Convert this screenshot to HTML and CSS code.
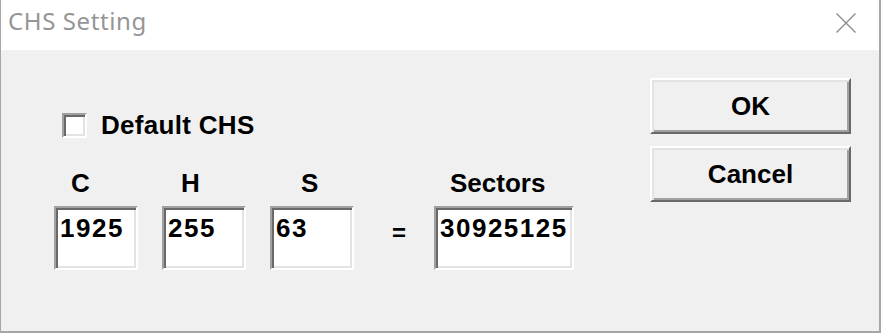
FILE: index.html
```html
<!DOCTYPE html>
<html lang="en">
<head>
    <meta charset="UTF-8">
    <title>CHS Setting</title>
    <link rel="stylesheet" href="styles.css">
</head>
<body>
    <div class="window">
        <div class="titlebar">
            <span class="title">CHS Setting</span>
            <span class="close">
                <svg width="20" height="20" viewBox="0 0 20 20">
                    <path d="M0.5 0.5 L19.5 19.5 M19.5 0.5 L0.5 19.5" stroke="#8a8a8a" stroke-width="1.3" fill="none"/>
                </svg>
            </span>
        </div>

        <div class="client">
            <div class="main">
                <label class="check-row">
                    <span class="checkbox"></span>
                    Default CHS
                </label>

                <div class="fields">
                    <div class="field">
                        <span class="field-label lbl-c">C</span>
                        <div class="edit">1925</div>
                    </div>
                    <div class="field">
                        <span class="field-label lbl-h">H</span>
                        <div class="edit">255</div>
                    </div>
                    <div class="field">
                        <span class="field-label lbl-s">S</span>
                        <div class="edit">63</div>
                    </div>
                    <span class="equals">=</span>
                    <div class="field">
                        <span class="field-label lbl-sectors">Sectors</span>
                        <div class="edit edit-wide">30925125</div>
                    </div>
                </div>
            </div>

            <div class="buttons">
                <button class="btn">OK</button>
                <button class="btn">Cancel</button>
            </div>
        </div>
    </div>
</body>
</html>
```

FILE: styles.css
```css
:root {
    --face: #f0f0f0;
    --light: #e3e3e3;
    --shadow: #a0a0a0;
    --dark: #696969;
    --frame: #a6a6a6;
}

html, body {
    margin: 0;
    padding: 0;
}

body {
    background: var(--face);
    font-family: 'Liberation Sans', Arial, sans-serif;
}

.window {
    width: 881px;
    height: 333px;
    box-sizing: border-box;
    border-left: 1px solid var(--frame);
    border-right: 2px solid var(--frame);
    border-bottom: 2px solid var(--frame);
    display: flex;
    flex-direction: column;
}

.titlebar {
    height: 50px;
    flex: none;
    background: #fff;
    display: flex;
    justify-content: space-between;
    align-items: flex-start;
}

.title {
    font-family: 'Noto Sans', sans-serif;
    font-size: 24px;
    line-height: 32px;
    color: #959595;
    padding: 5px 0 0 7px;
    letter-spacing: 0.6px;
}

.close {
    width: 20px;
    height: 20px;
    margin: 13px 23px 0 0;
}

.close svg {
    display: block;
}

.client {
    flex: 1;
    background: var(--face);
    display: flex;
    font-weight: bold;
    font-size: 26px;
    line-height: 30px;
    color: #000;
}

.main {
    flex: 1;
    padding: 60px 0 0 53px;
}

.check-row {
    display: flex;
    align-items: center;
    gap: 14px;
    margin-left: 8px;
    height: 30px;
    letter-spacing: 0.3px;
}

.checkbox {
    width: 21px;
    height: 21px;
    background: #fff;
    border: 2px solid;
    border-color: var(--shadow) #fff #fff var(--shadow);
    box-shadow: inset 2px 2px 0 var(--dark), inset -2px -2px 0 var(--light);
    flex: none;
}

.fields {
    display: flex;
    align-items: flex-start;
    gap: 24px;
    margin-top: 28px;
}

.field {
    display: flex;
    flex-direction: column;
}

.field-label {
    height: 30px;
    margin-bottom: 8px;
}

.lbl-c { padding-left: 17px; }
.lbl-h { padding-left: 19px; }
.lbl-s { padding-left: 31px; }
.lbl-sectors { padding-left: 16px; }

.edit {
    width: 84px;
    height: 64px;
    box-sizing: border-box;
    background: #fff;
    border: 2px solid;
    border-color: var(--shadow) #fff #fff var(--shadow);
    box-shadow: inset 2px 2px 0 var(--dark), inset -2px -2px 0 var(--light);
    padding: 5px 0 0 4px;
    letter-spacing: 1.5px;
}

.edit-wide {
    width: 140px;
}

.equals {
    font-size: 24px;
    line-height: 24px;
    margin: 53px 0 0 14px;
    width: 18px;
}

.buttons {
    display: flex;
    flex-direction: column;
    gap: 12px;
    padding: 28px 28px 0 0;
}

.btn {
    width: 201px;
    height: 56px;
    box-sizing: border-box;
    background: var(--face);
    border: 2px solid;
    border-color: #fff var(--dark) var(--dark) #fff;
    box-shadow: inset 2px 2px 0 var(--light), inset -2px -2px 0 var(--shadow);
    font-family: inherit;
    font-weight: bold;
    font-size: 26px;
    line-height: 30px;
    color: #000;
    padding: 0;
}
```
